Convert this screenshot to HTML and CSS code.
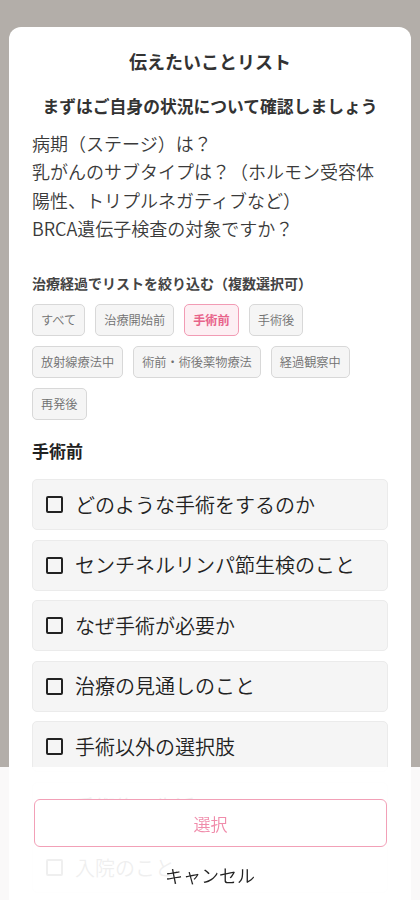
FILE: index.html
```html
<!DOCTYPE html>
<html lang="ja">
<head>
<meta charset="utf-8">
<title>伝えたいことリスト</title>
<link rel="stylesheet" href="styles.css">
</head>
<body>
<div class="page">
  <div class="modal">
    <h1 class="title">伝えたいことリスト</h1>
    <h2 class="subtitle">まずはご自身の状況について確認しましょう</h2>
    <p class="intro">病期（ステージ）は？<br>乳がんのサブタイプは？（ホルモン受容体陽性、トリプルネガティブなど）<br>BRCA遺伝子検査の対象ですか？</p>
    <div class="filter-label">治療経過でリストを絞り込む（複数選択可）</div>
    <div class="chips">
      <span class="chip">すべて</span>
      <span class="chip">治療開始前</span>
      <span class="chip chip-on">手術前</span>
      <span class="chip">手術後</span>
      <span class="chip">放射線療法中</span>
      <span class="chip">術前・術後薬物療法</span>
      <span class="chip">経過観察中</span>
      <span class="chip">再発後</span>
    </div>
    <h3 class="section">手術前</h3>
    <ul class="items">
      <li class="item"><span class="box"></span><span class="label">どのような手術をするのか</span></li>
      <li class="item"><span class="box"></span><span class="label">センチネルリンパ節生検のこと</span></li>
      <li class="item"><span class="box"></span><span class="label">なぜ手術が必要か</span></li>
      <li class="item"><span class="box"></span><span class="label">治療の見通しのこと</span></li>
      <li class="item"><span class="box"></span><span class="label">手術以外の選択肢</span></li>
      <li class="item"><span class="box"></span><span class="label">手術後の生活のこと</span></li>
      <li class="item"><span class="box"></span><span class="label">入院のこと</span></li>
    </ul>
  </div>
</div>
<div class="footer">
  <button class="select-btn">選択</button>
  <div class="cancel">キャンセル</div>
</div>
</body>
</html>
```

FILE: styles.css
```css
html, body {
  margin: 0;
  padding: 0;
  height: 900px;
  overflow: hidden;
}
body {
  background: #b3aea9;
  font-family: "Noto Sans CJK JP", "Noto Sans", sans-serif;
  color: #333;
}
.page {
  padding: 27px 9px 0;
}
.modal {
  background: #fff;
  border-radius: 12px 12px 0 0;
  padding: 21px 23px 40px;
}
.title {
  margin: 0;
  font-size: 18px;
  line-height: 26px;
  font-weight: 700;
  text-align: center;
  color: #333;
}
.subtitle {
  margin: 20px 0 0;
  font-size: 16.8px;
  line-height: 24px;
  font-weight: 700;
  text-align: center;
  color: #333;
}
.intro {
  margin: 11px 0 0;
  font-size: 18px;
  line-height: 28.3px;
  font-weight: 350;
  color: #3a3a3a;
}
.filter-label {
  margin-top: 31px;
  font-size: 14px;
  line-height: 20px;
  font-weight: 700;
  color: #444;
}
.chips {
  margin-top: 11px;
  display: flex;
  flex-wrap: wrap;
  gap: 10px;
}
.chip {
  display: inline-flex;
  align-items: center;
  height: 32px;
  box-sizing: border-box;
  padding: 0 8px;
  font-size: 12.2px;
  font-weight: 350;
  color: #707070;
  background: #f5f5f5;
  border: 1px solid #d8d8d8;
  border-radius: 5px;
}
.chip-on {
  color: #e8638a;
  font-weight: 700;
  background: #fdeff3;
  border-color: #f29bb4;
}
.section {
  margin: 18px 0 0;
  font-size: 17px;
  line-height: 26px;
  font-weight: 700;
  color: #222;
}
.items {
  list-style: none;
  margin: 15px 0 0;
  padding: 0;
  display: flex;
  flex-direction: column;
  gap: 9.5px;
}
.item {
  height: 51px;
  box-sizing: border-box;
  display: flex;
  align-items: center;
  padding: 0 13px;
  gap: 12px;
  background: #f5f5f5;
  border: 1px solid #ebebeb;
  border-radius: 5px;
}
.box {
  width: 17px;
  height: 17px;
  box-sizing: border-box;
  border: 2px solid #222;
  border-radius: 2px;
  flex: none;
}
.label {
  font-size: 20px;
  font-weight: 350;
  color: #222;
  line-height: 28px;
}
.footer {
  position: fixed;
  left: 0;
  right: 0;
  bottom: 0;
  height: 133px;
  background: rgba(255, 255, 255, 0.93);
  display: flex;
  flex-direction: column;
  align-items: center;
  padding-top: 32px;
  box-sizing: border-box;
}
.select-btn {
  width: 353px;
  height: 48px;
  background: #fff;
  border: 1.5px solid #f2a0b7;
  border-radius: 6px;
  font-family: inherit;
  font-size: 17px;
  font-weight: 350;
  color: #f08cab;
  margin-left: 1px;
}
.cancel {
  margin-top: 16px;
  font-size: 18px;
  line-height: 24px;
  font-weight: 350;
  color: #222;
}
```
